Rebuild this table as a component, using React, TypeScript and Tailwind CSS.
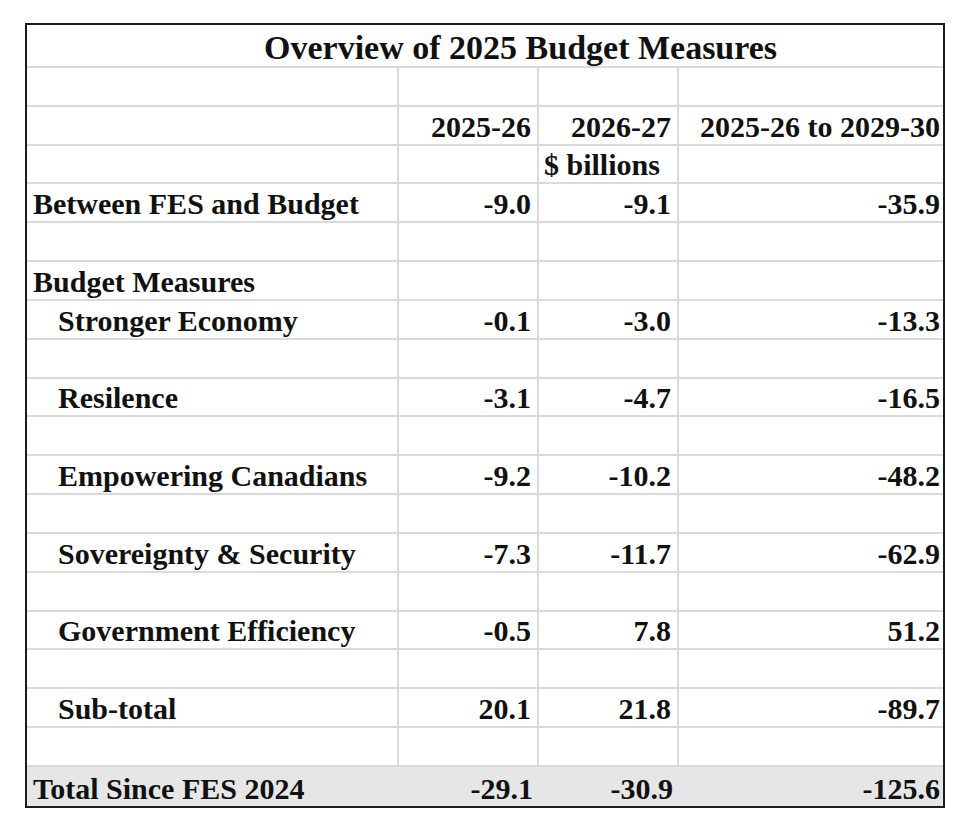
type Row = {
  label?: string
  indent?: boolean
  values?: [string, string, string]
  unit?: string
  total?: boolean
}

const rows: Row[] = [
  {},
  { values: ['2025-26', '2026-27', '2025-26 to 2029-30'] },
  { unit: '$ billions' },
  { label: 'Between FES and Budget', values: ['-9.0', '-9.1', '-35.9'] },
  {},
  { label: 'Budget Measures' },
  { label: 'Stronger Economy', indent: true, values: ['-0.1', '-3.0', '-13.3'] },
  {},
  { label: 'Resilence', indent: true, values: ['-3.1', '-4.7', '-16.5'] },
  {},
  { label: 'Empowering Canadians', indent: true, values: ['-9.2', '-10.2', '-48.2'] },
  {},
  { label: 'Sovereignty & Security', indent: true, values: ['-7.3', '-11.7', '-62.9'] },
  {},
  { label: 'Government Efficiency', indent: true, values: ['-0.5', '7.8', '51.2'] },
  {},
  { label: 'Sub-total', indent: true, values: ['20.1', '21.8', '-89.7'] },
  {},
  { label: 'Total Since FES 2024', values: ['-29.1', '-30.9', '-125.6'], total: true },
]

function TableRow({ row }: { row: Row }) {
  const line = row.total ? '' : 'border-r-2 border-[#dadada]'
  const cell = 'flex items-end h-full pb-[2px] leading-[30px]'
  return (
    <div
      className={
        'grid grid-cols-[372px_140px_140px_264px] h-[38.84px] ' +
        (row.total ? 'bg-[#e6e6e6]' : 'border-b-2 border-[#dadada]')
      }
    >
      <div className={`${cell} ${line} ${row.indent ? 'pl-[31px]' : 'pl-[6px]'}`}>
        {row.label}
      </div>
      <div className={`${cell} ${line} justify-end pr-[6px]`}>{row.values?.[0]}</div>
      <div className={`${cell} ${line} ${row.unit ? 'justify-start pl-[5px]' : 'justify-end pr-[6px]'}`}>
        {row.unit ?? row.values?.[1]}
      </div>
      <div className={`${cell} justify-end pr-[3px]`}>{row.values?.[2]}</div>
    </div>
  )
}

export default function App() {
  return (
    <div className="min-h-screen bg-white pt-[23px] pl-[25px]">
      <div
        className="w-[920px] border-2 border-[#1c1c1c] font-bold text-[30px] text-[#111]"
        style={{ fontFamily: '"Liberation Serif", "Times New Roman", serif' }}
      >
        <div className="h-[43px] flex items-end pl-[237px] pb-[1px] text-[34px] leading-[34px] border-b-2 border-[#dadada]">
          Overview of 2025 Budget Measures
        </div>
        {rows.map((r, i) => (
          <TableRow key={i} row={r} />
        ))}
      </div>
    </div>
  )
}
